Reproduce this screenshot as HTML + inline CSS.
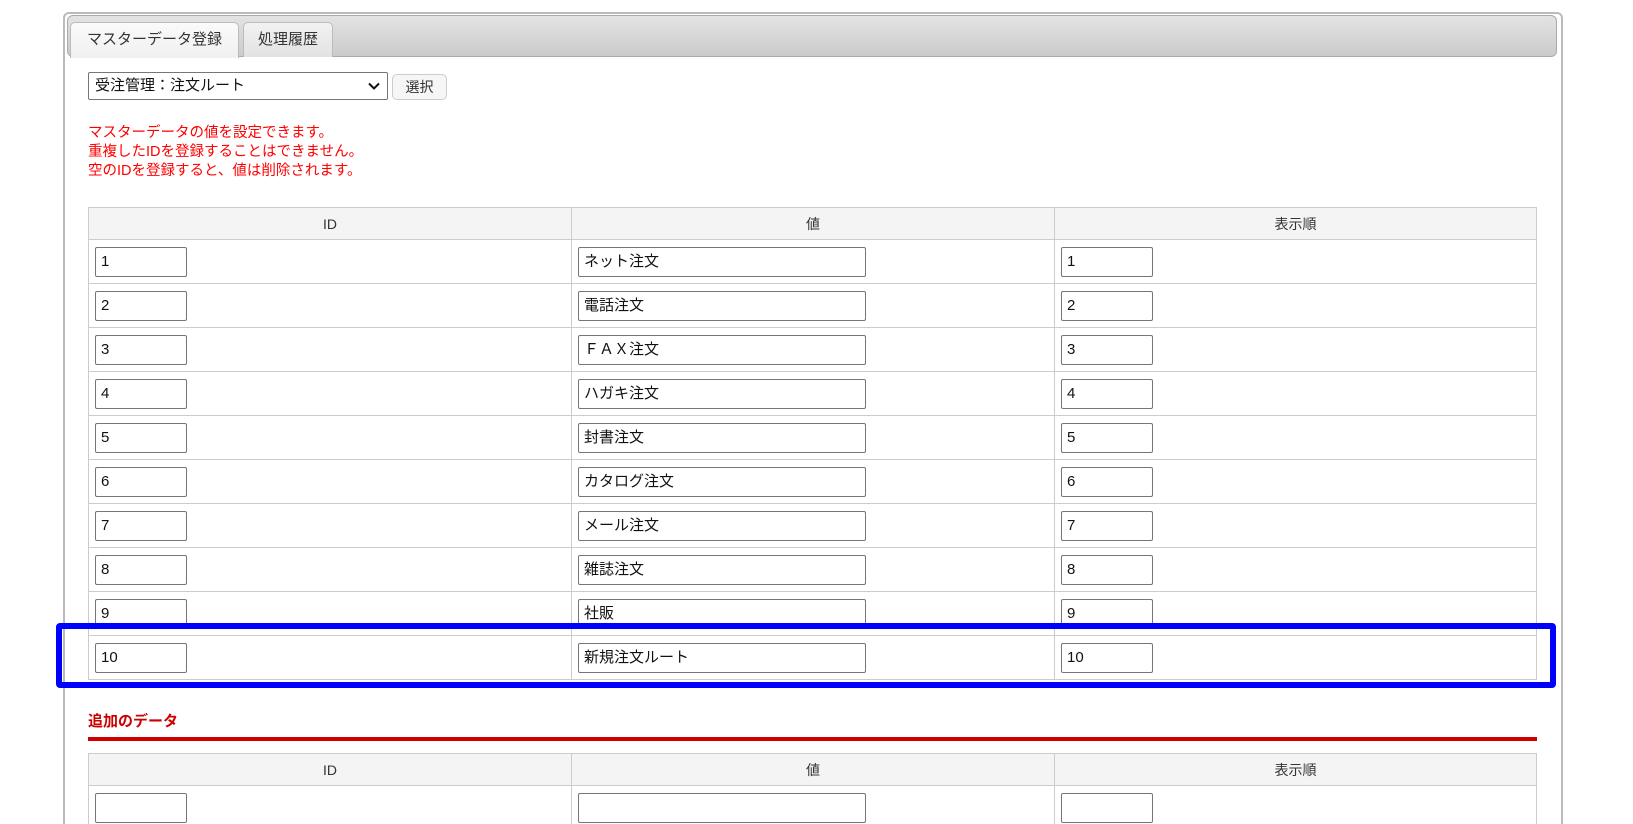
<!DOCTYPE html>
<html><head><meta charset="utf-8"><style>
*{box-sizing:border-box}
html,body{margin:0;width:1633px;height:824px;overflow:hidden}
body{background:#fff;font-family:"Liberation Sans","Noto Sans CJK JP",sans-serif;color:#222;position:relative}
.abs{position:absolute}
.panel{left:63px;top:12px;width:1500px;height:900px;border:2px solid #bbb;border-radius:6px}
.bar{left:67px;top:15px;width:1490px;height:42px;border:1px solid #aaa;border-radius:6px;background:linear-gradient(#e3e3e3,#cbcbcb)}
.tab{top:22px;height:36px;border:1px solid #bbb;border-bottom:none;border-radius:5px 5px 0 0;font-size:15px;color:#333;text-align:center;line-height:34px}
.sel{left:88px;top:72px;width:300px;height:28px;border:1px solid #767676;border-radius:2px;font-size:15px;line-height:26px;padding-left:6px;color:#111}
.btn{left:392px;top:74px;width:55px;height:26px;border:1px solid #ccc;border-radius:5px;background:#f6f6f6;font-size:14px;line-height:24px;text-align:center;color:#333}
.msg{left:88px;top:124px;color:#f00;font-size:14.5px;line-height:19px}
table{position:absolute;left:88px;border-collapse:collapse;width:1449px}
td,th{border:1px solid #ccc;padding:0}
th{background:#f3f4f3;font-weight:normal;font-size:14px;height:32px;color:#333}
td{height:44px;padding-left:6px}
.i{display:block;height:30px;border:1px solid #767676;border-radius:2px;font-size:15px;line-height:28px;padding-left:5px;color:#111}
.w1{width:92px}.w2{width:288px}
.c1{width:483px}.c2{width:483px}
</style></head><body>
<div class="abs panel"></div>
<div class="abs bar"></div>
<div class="abs tab" style="left:70px;width:169px;background:linear-gradient(#fafafa,#f0f0f0);height:36px">マスターデータ登録</div>
<div class="abs tab" style="left:243px;width:90px;background:linear-gradient(#f2f2f2,#e2e2e2);height:35px">処理履歴</div>
<div class="abs sel">受注管理：注文ルート<svg class="abs" style="right:7px;top:9px" width="12" height="8" viewBox="0 0 12 8"><path d="M1 1.5L6 6.5L11 1.5" stroke="#111" stroke-width="2" fill="none"/></svg></div>
<div class="abs btn">選択</div>
<div class="abs msg">マスターデータの値を設定できます。<br>重複したIDを登録することはできません。<br>空のIDを登録すると、値は削除されます。</div>
<table style="top:207px">
<tr><th class="c1">ID</th><th class="c2">値</th><th>表示順</th></tr>
<tr><td><span class="i w1">1</span></td><td><span class="i w2">ネット注文</span></td><td><span class="i w1">1</span></td></tr>
<tr><td><span class="i w1">2</span></td><td><span class="i w2">電話注文</span></td><td><span class="i w1">2</span></td></tr>
<tr><td><span class="i w1">3</span></td><td><span class="i w2">ＦＡＸ注文</span></td><td><span class="i w1">3</span></td></tr>
<tr><td><span class="i w1">4</span></td><td><span class="i w2">ハガキ注文</span></td><td><span class="i w1">4</span></td></tr>
<tr><td><span class="i w1">5</span></td><td><span class="i w2">封書注文</span></td><td><span class="i w1">5</span></td></tr>
<tr><td><span class="i w1">6</span></td><td><span class="i w2">カタログ注文</span></td><td><span class="i w1">6</span></td></tr>
<tr><td><span class="i w1">7</span></td><td><span class="i w2">メール注文</span></td><td><span class="i w1">7</span></td></tr>
<tr><td><span class="i w1">8</span></td><td><span class="i w2">雑誌注文</span></td><td><span class="i w1">8</span></td></tr>
<tr><td><span class="i w1">9</span></td><td><span class="i w2">社販</span></td><td><span class="i w1">9</span></td></tr>
<tr><td><span class="i w1">10</span></td><td><span class="i w2">新規注文ルート</span></td><td><span class="i w1">10</span></td></tr>
</table>
<div class="abs" style="left:56px;top:623px;width:1500px;height:65px;border:6px solid #0000ff;border-radius:4px"></div>
<div class="abs" style="left:88px;top:710px;color:#c00;font-weight:bold;font-size:15px">追加のデータ</div>
<div class="abs" style="left:88px;top:737px;width:1449px;height:4px;background:#c00"></div>
<table style="top:753px">
<tr><th class="c1">ID</th><th class="c2">値</th><th>表示順</th></tr>
<tr><td><span class="i w1"></span></td><td><span class="i w2"></span></td><td><span class="i w1"></span></td></tr>
<tr><td>&nbsp;</td><td></td><td></td></tr>
</table>
</body></html>
